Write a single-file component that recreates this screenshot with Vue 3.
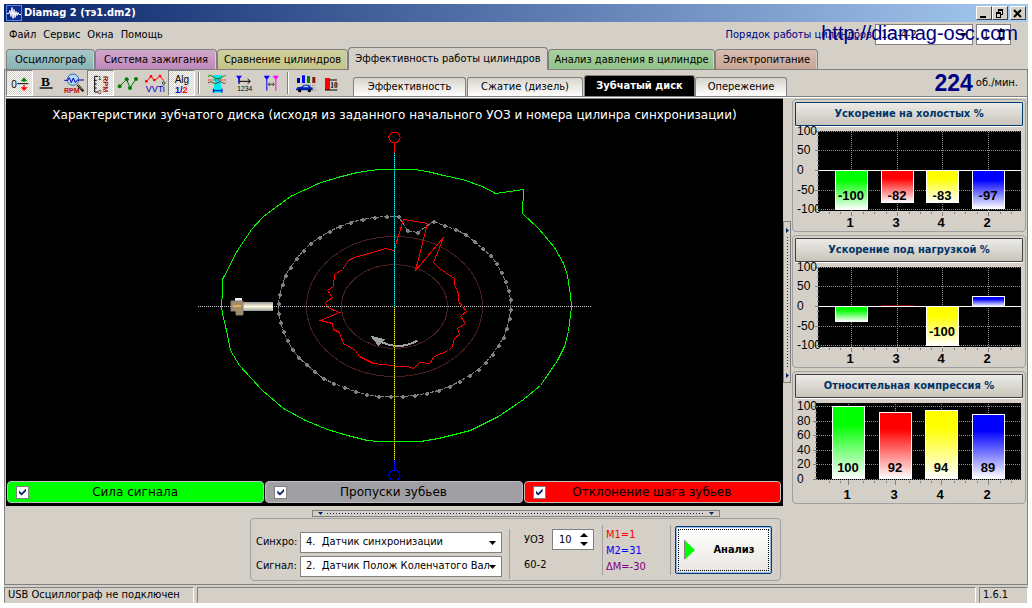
<script setup>
import { ref } from 'vue'

const menu = ['Файл', 'Сервис', 'Окна', 'Помощь']
const tabs = [
  { name: 'Осциллограф', tone: 'teal', width: 89 },
  { name: 'Система зажигания', tone: 'violet', width: 122 },
  { name: 'Сравнение цилиндров', tone: 'olive', width: 131 },
  { name: 'Эффективность работы цилиндров', tone: 'active', width: 200 },
  { name: 'Анализ давления в цилиндре', tone: 'green', width: 167 },
  { name: 'Электропитание', tone: 'brown', width: 103 }
]
const subtabs = [
  { name: 'Эффективность', width: 113 },
  { name: 'Сжатие (дизель)', width: 116 },
  { name: 'Зубчатый диск', width: 111, active: true },
  { name: 'Опережение', width: 92 }
]
const layers = ref([
  { name: 'Сила сигнала', tone: 'lime', on: true },
  { name: 'Пропуски зубьев', tone: 'grey', on: true },
  { name: 'Отклонение шага зубьев', tone: 'red', on: true }
])
const uoz = ref('10')
const first = ref('1')

const full = { ticks: [[100, 4], [50, 23], [0, 43], [-50, 63], [-100, 82]], left: 23, bottom: 84, zero: 43, xs: [56, 102, 147, 193] }
const charts = [
  {
    title: 'Ускорение на холостых %', focus: true, ...full,
    bars: [
      { id: 1, c: 'lime', y: 43, h: 39, t: '-100' },
      { id: 3, c: 'red', y: 43, h: 32, t: '-82' },
      { id: 4, c: 'yellow', y: 43, h: 32, t: '-83' },
      { id: 2, c: 'blue', y: 43, h: 38, t: '-97' }
    ]
  },
  {
    title: 'Ускорение под нагрузкой %', ...full,
    bars: [
      { id: 1, c: 'lime', y: 43, h: 15 },
      { id: 3, c: 'red', y: 42, h: 0 },
      { id: 4, c: 'yellow', y: 43, h: 39, t: '-100' },
      { id: 2, c: 'blue', y: 33, h: 10 }
    ]
  },
  {
    title: 'Относительная компрессия %',
    ticks: [[100, 7], [80, 22], [60, 36], [40, 51], [20, 65], [0, 80]], left: 21, bottom: 81, zero: 80, xs: [53, 100, 146, 193],
    bars: [
      { id: 1, c: 'lime', y: 7, h: 72, t: '100' },
      { id: 3, c: 'red', y: 13, h: 66, t: '92' },
      { id: 4, c: 'yellow', y: 11, h: 68, t: '94' },
      { id: 2, c: 'blue', y: 15, h: 64, t: '89' }
    ]
  }
]
const gradients = { lime: '#00ff00', red: '#ff0000', yellow: '#ffff00', blue: '#0000ff' }
const minor = [34, 45, 68, 79, 91, 114, 125, 136, 159, 170, 182, 205, 216]

const teeth = [
  [208, 91], [196, 91], [184, 92], [172, 94], [160, 97], [149, 101], [139, 106], [129, 112], [120, 118], [113, 125],
  [106, 133], [100, 142], [95, 150], [92, 159], [89, 169], [88, 178], [88, 188], [90, 197], [93, 206], [97, 215],
  [102, 224], [108, 232], [116, 239], [124, 246], [133, 253], [143, 258], [154, 262], [165, 266], [176, 269], [188, 271],
  [200, 271], [212, 271], [224, 270], [236, 268], [248, 265], [259, 261], [269, 256], [279, 250], [288, 244], [295, 237],
  [302, 229], [308, 220], [313, 212], [316, 203], [319, 193], [320, 184], [320, 174], [318, 165], [315, 156], [311, 147],
  [306, 138], [300, 130], [292, 123], [284, 116], [275, 109], [265, 104], [254, 100], [243, 96], [227, 107], [217, 105]
]
const force = '204,44 190,44 180,45 167,47 147,52 128,58 100,71 73,91 61,104 47,125 32,154 32,168 31,180 32,188 36,205 40,225 49,240 72,265 93,283 115,295 137,304 157,310 177,315 187,316 210,316 230,316 248,313 280,305 308,291 333,274 350,260 367,235 374,221 378,206 381,181 380,170 377,150 373,138 364,122 348,103 332,88 332,76 333,75 333,64 305,68 292,61 272,54 253,50 237,46 224,44'
const pitch = '205,120 204,125 195,123 182,127 164,132 158,135 152,144 144,149 143,161 137,165 142,172 135,177 137,182 149,187 130,195 142,198 143,204 149,207 153,218 165,225 169,231 183,238 202,240 205,241 217,241 223,243 229,237 239,238 244,231 258,225 262,221 264,213 269,209 267,203 275,198 270,191 276,186 268,176 268,168 264,159 264,153 249,143 243,137 253,112 225,145 237,98 213,94'
</script>

<template>
  <div class="screen">
    <div class="window">
      <header class="titlebar">
        <svg class="logo" viewBox="0 0 16 16" aria-hidden="true">
          <rect width="16" height="16" fill="#0a2a90" />
          <path d="M0 .5h16M0 15.5h16M.5 0v16M15.5 0v16" stroke="#5f86d8" />
          <path d="M1 8.5h2l1-3 1 6 1-9 1 11 1-9 1 8 1-6 1 4 1-3 1 2h2" fill="none" stroke="#fff" />
        </svg>
        <h1>Diamag 2 (тэ1.dm2)</h1>
        <div class="caption-buttons">
          <button aria-label="Свернуть"><svg viewBox="0 0 13 11"><path d="M3 8h6v2H3z" /></svg></button>
          <button aria-label="Восстановить"><svg viewBox="0 0 13 11"><path d="M5 1.5h5M5 2.5h5M5.5 1v3M9.5 1v6M8 6.5h2M3 4.5h5M3 5.5h5M3.5 4v5M7.5 4v6M3 9.5h5" stroke="#000" /></svg></button>
          <button class="close" aria-label="Закрыть"><svg viewBox="0 0 13 11"><path d="M3 2l7 7M10 2l-7 7" stroke="#000" stroke-width="2" /></svg></button>
        </div>
      </header>

      <div class="menubar">
        <nav>
          <button v-for="m in menu" :key="m">{{ m }}</button>
        </nav>
        <div class="order">
          <label for="order">Порядок работы цилиндров</label>
          <div class="combo short">
            <select id="order"><option>1-3-4-2</option></select>
            <svg viewBox="0 0 7 4"><path d="M0 0h7L3.5 4z" /></svg>
          </div>
          <div class="spin small">
            <input v-model="first" type="text" aria-label="Номер цилиндра" />
            <div class="arrows">
              <button aria-label="Больше"><svg viewBox="0 0 8 4"><path d="M0 4h8L4 0z" /></svg></button>
              <button aria-label="Меньше"><svg viewBox="0 0 8 4"><path d="M0 0h8L4 4z" /></svg></button>
            </div>
          </div>
          <a class="site" href="http://diamag-osc.com">http://diamag-osc.com</a>
        </div>
      </div>

      <div class="tabs">
        <button v-for="t in tabs" :key="t.name" :class="['tab', t.tone]" :style="{ flexBasis: t.width + 'px' }">{{ t.name }}</button>
      </div>

      <main class="page">
        <div class="toolbar">
          <button class="tool on" aria-label="Ноль">
            <svg viewBox="18 213 78 72"><text x="31" y="263" font-size="30">0</text><path d="M49 251h33" stroke="#000" stroke-width="3" /><path d="M69 233v13" stroke="#008000" stroke-width="4" /><path d="M59 244l10-11 11 11z" fill="#008000" /><path d="M69 255v10" stroke="red" stroke-width="4" /><path d="M59 262h21l-11 11z" fill="red" /></svg>
          </button>
          <button class="tool" aria-label="Жирные линии">
            <svg viewBox="97 213 78 72"><text x="118" y="257" font-size="40" font-weight="bold" class="serif">B</text><path d="M114 264h39" stroke="#000" stroke-width="4" /></svg>
          </button>
          <button class="tool" aria-label="Поиск оборотов">
            <svg viewBox="177 213 78 72"><path d="M227 255l17 19" stroke="#000" stroke-width="7" /><path d="M228 255l14 16" stroke="#d0a040" stroke-width="3" /><circle cx="213" cy="239" r="17" fill="#b4dcf8" stroke="#3468a8" stroke-width="3" /><path d="M187 241h10l5-8 6 15 6-14 6 14 6-8h20" fill="none" stroke="#0000c0" stroke-width="3" /><text x="186" y="278" font-size="21" font-weight="bold" fill="#b01010">RPM</text></svg>
          </button>
          <button class="tool on" aria-label="Шкала оборотов">
            <svg viewBox="261 213 78 72"><path d="M291 229h-10v47h10M281 241h6M281 252h6M281 264h6" fill="none" stroke="#000" stroke-width="3" /><text x="291" y="240" font-size="18">1</text><text x="291" y="281" font-size="18">0</text><text transform="translate(306 228) rotate(90)" font-size="22" font-weight="bold" fill="#a01010">RPM</text></svg>
          </button>
          <button class="tool" aria-label="График">
            <svg viewBox="339 213 78 72"><path d="M353 259l21-21 10 26 18-27" fill="none" stroke="#008000" stroke-width="3" /><g fill="#008000"><circle cx="353" cy="259" r="6" /><circle cx="374" cy="238" r="6" /><circle cx="384" cy="264" r="6" /><circle cx="402" cy="237" r="6" /></g></svg>
          </button>
          <button class="tool" aria-label="VVTi">
            <svg viewBox="420 213 78 72"><path d="M432 246l15-17 10 13 17-14 11 14" fill="none" stroke="red" stroke-width="3" /><g fill="red"><circle cx="433" cy="244" r="4" /><circle cx="447" cy="229" r="4" /><circle cx="457" cy="240" r="4" /><circle cx="474" cy="228" r="4" /></g><circle cx="485" cy="249" r="4" fill="none" stroke="#000" stroke-width="2" /><text x="431" y="276" font-size="27" fill="#0000d0">VVTi</text></svg>
          </button>
          <button class="tool on" aria-label="Алгоритм">
            <svg viewBox="504 213 78 72"><text x="521" y="250" font-size="30">Alg</text><text x="522" y="280" font-size="27" font-weight="bold" fill="#0000c0">1/<tspan fill="red">2</tspan></text></svg>
          </button>
          <i class="sep"></i>
          <button class="tool" aria-label="Диапазон">
            <svg viewBox="606 213 78 72"><path d="M633 225h28l-5 22 5 31h-28l5-31z" fill="#00e8f0" /><path d="M618 229q8-6 15 1t15 6 14-6 9-2" fill="none" stroke="#008000" stroke-width="3" /><path d="M618 240h55" stroke="red" stroke-width="3" stroke-dasharray="4 3" /><path d="M618 249q8-7 15-1t15 0 14 0 9 0" fill="none" stroke="#604020" stroke-width="3" /><path d="M634 272h26M634 266v12M660 266v12" stroke="#0000d0" stroke-width="3" /></svg>
          </button>
          <button class="tool" aria-label="Нумерация">
            <svg viewBox="687 213 78 72"><path d="M711 230v22M711 244h33M737 237l8 7-8 7" fill="none" stroke="#000" stroke-width="3" /><path d="M702 227h18l-9 12z" fill="blue" /><path d="M711 230v20" stroke="blue" stroke-width="3" /><text x="706" y="273" font-size="20">1234</text></svg>
          </button>
          <button class="tool" aria-label="Метки">
            <svg viewBox="768 213 78 72"><path d="M785 227h19l-10 13zM793 235h3v37h-3z" fill="blue" /><path d="M812 227h19l-10 13zM820 235h3v37h-3z" fill="magenta" /><path d="M800 253h16M804 248l-5 5 5 5M812 248l5 5-5 5" fill="none" stroke="#000" stroke-width="2" /></svg>
          </button>
          <i class="sep"></i>
          <button class="tool" aria-label="Автомобиль">
            <svg viewBox="873 213 78 72"><path d="M885 234h9v15h-9z" fill="#00008b" /><path d="M900 226h9v23h-9z" fill="blue" /><path d="M915 228h9v21h-9z" fill="#008000" /><path d="M931 231h9v18h-9z" fill="#8b1010" /><path d="M882 268l4-6 13-2 6-6h15l7 8 5 1v8h-50z" fill="#0020b8" /><path d="M906 257h11l4 5h-18z" fill="#a0d0ff" /><circle cx="893" cy="272" r="5" /><circle cx="922" cy="272" r="5" /><path d="M924 256h18M932 264h10M934 272h9" stroke="#888" stroke-width="3" stroke-dasharray="3 3" /></svg>
          </button>
          <button class="tool" aria-label="Порог">
            <svg viewBox="957 213 78 72"><path d="M972 234h15v36h-15z" fill="red" /><path d="M972 270h37M984 240h24" stroke="#000" stroke-width="3" /><text x="988" y="263" font-size="22" font-weight="bold" class="serif">10</text></svg>
          </button>
          <div class="subtabs">
            <button v-for="s in subtabs" :key="s.name" :class="['subtab', { active: s.active }]" :style="{ flexBasis: s.width + 'px' }">{{ s.name }}</button>
          </div>
          <div class="speed"><strong>224</strong><span>об./мин.</span></div>
        </div>

        <div class="work">
          <section class="disc">
            <h2>Характеристики зубчатого диска (исходя из заданного начального УОЗ и номера цилинра синхронизации)</h2>
            <svg class="plot" viewBox="0 0 410 355" role="img" aria-label="Зубчатый диск">
              <defs>
                <linearGradient id="rod" x2="0" y2="1">
                  <stop offset="0" stop-color="#999" /><stop offset=".5" stop-color="#fffbe0" /><stop offset="1" stop-color="#999" />
                </linearGradient>
              </defs>
              <g fill="none" shape-rendering="crispEdges" transform="translate(.5 .5)">
                <ellipse cx="204" cy="181" rx="88" ry="70" stroke="#482020" />
                <ellipse cx="204" cy="181" rx="53" ry="42" stroke="#482020" />
                <path d="M7 181h394" stroke="#c8c8c8" stroke-dasharray="1 1" />
                <path d="M192 217q17 8 35-2" stroke="#a0a0a4" stroke-width="2" />
                <path d="M181 211l13 3-6 6z" fill="#a0a0a4" stroke="#a0a0a4" />
                <polygon :points="force" stroke="#00ff00" />
                <polygon :points="teeth.join(' ')" stroke="#808080" stroke-dasharray="4 1" />
                <path v-for="(p, i) in teeth" :key="i" :d="`M${p[0] - 2} ${p[1]}h4M${p[0]} ${p[1] - 2}v4`" stroke="#808080" stroke-width="2" />
                <polygon :points="pitch" stroke="#ff0000" />
                <path d="M204 17v10" stroke="#ff0000" />
                <path d="M204 27v154" stroke="#008080" />
                <path d="M204 27v154" stroke="#00ffff" stroke-dasharray="1 1" />
                <path d="M204 334v11" stroke="#0000ff" />
                <path d="M204 181v153" stroke="#707000" />
                <path d="M204 181v153" stroke="#ffff00" stroke-dasharray="1 1" />
                <path d="M201 7h6l3 5-3 5h-6l-3-5z" stroke="#ff0000" />
                <path d="M201 345h6l3 5-3 5h-6l-3-5z" stroke="#0000ff" />
              </g>
              <rect x="45" y="173" width="7" height="4" fill="#f0f0f0" />
              <rect x="53" y="177" width="30" height="9" fill="url(#rod)" />
              <path d="M41 176h12v14h-7v-4h-5z" fill="#a48c68" stroke="#808080" />
              <path d="M43 181h8" stroke="#d8b060" stroke-width="2" />
            </svg>
            <div class="legend">
              <label v-for="l in layers" :key="l.name" :class="['layer', l.tone]">
                <input v-model="l.on" type="checkbox" /><span>{{ l.name }}</span>
              </label>
            </div>
          </section>

          <div class="vsplit"><svg viewBox="0 0 3 5"><path d="M0 0v5l3-2.5z" /></svg><i></i><svg viewBox="0 0 3 5"><path d="M0 0v5l3-2.5z" /></svg></div>

          <aside class="charts">
            <section v-for="(c, n) in charts" :key="c.title" class="chart">
              <button :class="['chart-title', { focus: c.focus }]">{{ c.title }}</button>
              <svg viewBox="0 -1 228 103" role="img" :aria-label="c.title">
                <defs>
                  <linearGradient v-for="(g, k) in gradients" :id="`${k}${n}`" :key="k" x2="0" y2="1">
                    <stop offset="0" :stop-color="g" /><stop offset=".25" :stop-color="g" /><stop offset="1" stop-color="#fff" />
                  </linearGradient>
                </defs>
                <rect :x="c.left" y="4" :width="226 - c.left" :height="c.bottom - 4" />
                <g shape-rendering="crispEdges" transform="translate(.5 .5)" fill="none" stroke="#808080">
                  <path v-for="t in c.ticks" :key="t[0]" :d="`M${c.left} ${t[1]}H224`" stroke="#909090" stroke-dasharray="1 1" />
                  <path v-for="x in c.xs" :key="x" :d="`M${x} 4V${c.bottom}`" stroke="#909090" stroke-dasharray="1 1" />
                  <path v-for="t in c.ticks" :key="t[0]" :d="`M${c.left - 4} ${t[1]}h4`" />
                  <path v-for="k in 15" :key="k" :d="`M${c.left - 2} ${3 + k * 5}h2`" />
                  <path v-for="x in c.xs" :key="x" :d="`M${x} ${c.bottom}v4`" />
                  <path v-for="x in minor" :key="x" :d="`M${x} ${c.bottom}v2`" />
                  <path v-if="n < 2" :d="`M${c.left} ${c.zero}H225`" stroke="#fff" />
                  <rect v-for="(b, i) in c.bars" :key="b.id" :x="c.xs[i] - 16" :y="b.y" width="32" :height="b.h" :fill="`url(#${b.c}${n})`" :stroke="b.h ? '#fff' : 'none'" />
                  <path v-if="n === 1" d="M86 42h32" stroke="#800000" />
                </g>
                <g class="axis"><text v-for="t in c.ticks" :key="t[0]" x="2" :y="t[1] + 4">{{ t[0] }}</text></g>
                <g class="value">
                  <template v-for="(b, i) in c.bars" :key="b.id">
                    <text v-if="b.t" :x="c.xs[i]" y="73">{{ b.t }}</text>
                    <text :x="c.xs[i] - 1" y="100">{{ b.id }}</text>
                  </template>
                </g>
              </svg>
            </section>
          </aside>

          <div class="bottom">
            <div class="hsplit"><svg viewBox="0 0 5 3"><path d="M0 0h5L2.5 3z" /></svg><i></i><svg viewBox="0 0 5 3"><path d="M0 0h5L2.5 3z" /></svg></div>
            <form class="controls" @submit.prevent>
              <div class="sources">
                <label for="sync">Синхро:</label>
                <div class="combo">
                  <select id="sync"><option>4.&nbsp; Датчик синхронизации</option></select>
                  <svg viewBox="0 0 7 4"><path d="M0 0h7L3.5 4z" /></svg>
                </div>
                <label for="signal">Сигнал:</label>
                <div class="combo">
                  <select id="signal"><option>2.&nbsp; Датчик Полож Коленчатого Вал</option></select>
                  <svg viewBox="0 0 7 4"><path d="M0 0h7L3.5 4z" /></svg>
                </div>
              </div>
              <div class="angle">
                <div class="angle-row">
                  <label for="uoz">УОЗ</label>
                  <div class="spin">
                    <input id="uoz" v-model="uoz" type="text" />
                    <div class="arrows">
                      <button type="button" aria-label="Увеличить"><svg viewBox="0 0 8 4"><path d="M0 4h8L4 0z" /></svg></button>
                      <button type="button" aria-label="Уменьшить"><svg viewBox="0 0 8 4"><path d="M0 0h8L4 4z" /></svg></button>
                    </div>
                  </div>
                </div>
                <span>60-2</span>
              </div>
              <div class="marks"><span class="m1">M1=1</span><span class="m2">M2=31</span><span class="dm">ΔM=-30</span></div>
              <button class="analyse">
                <svg viewBox="0 0 11 20"><path d="M.5 0v20L11 10z" fill="#00ff00" /><path d="M.5 0v19" stroke="#808080" /></svg>
                <span>Анализ</span>
              </button>
            </form>
          </div>
        </div>
      </main>

      <footer class="status">
        <span class="device">USB Осциллограф не подключен</span>
        <span class="fill"></span>
        <span class="version">1.6.1</span>
      </footer>
    </div>
  </div>
</template>

<style>
body { background: #fff; }
</style>

<style scoped>
* { box-sizing: border-box; }
button, input, select { font: inherit; color: inherit; margin: 0; padding: 0; border: 0; background: none; border-radius: 0; }
svg { display: block; flex: none; }
.screen {
  min-height: 100vh; padding: 4px 4px 5px; display: flex;
  font: 11px/14px "DejaVu Sans Condensed", "DejaVu Sans", sans-serif; color: #000;
}
.window { flex: 1; min-width: 0; background: #d4d0c8; display: flex; flex-direction: column; }

.titlebar { height: 18px; display: flex; align-items: center; gap: 2px; padding: 0 2px; background: linear-gradient(90deg, #0a246a, #a6caf0); color: #fff; }
.logo { width: 16px; height: 16px; }
h1 { margin: 0; flex: 1; font-size: 11px; line-height: 18px; }
.caption-buttons { display: flex; }
.caption-buttons button { width: 16px; height: 14px; background: #d4d0c8; border: 1px solid; border-color: #fff #404040 #404040 #fff; }
.caption-buttons .close { margin-left: 2px; }
.caption-buttons svg { width: 13px; height: 11px; }

.menubar { height: 25px; display: flex; align-items: center; justify-content: space-between; padding: 0 17px 0 5px; }
.menubar nav { display: flex; gap: 7px; }
.order { position: relative; display: flex; align-items: center; gap: 3px; color: #000080; }
.order .combo, .order .spin { color: #000; }
.site { position: absolute; right: -7px; top: -2px; font: 20px/22px "Liberation Sans", sans-serif; color: #000080; text-decoration: none; }

.combo { position: relative; height: 21px; background: #fff; border: 1px solid #808080; }
.combo select { appearance: none; width: 100%; height: 100%; padding-left: 5px; outline: none; }
.combo svg { position: absolute; right: 5px; top: 8px; width: 7px; height: 4px; pointer-events: none; }
.combo.short { width: 98px; }
.spin { display: flex; align-items: center; width: 42px; height: 21px; background: #fff; border: 1px solid #808080; padding: 0 5px 0 6px; }
.spin.small { width: 35px; }
.spin input { flex: 1; min-width: 0; width: 10px; outline: none; }
.arrows { display: flex; flex-direction: column; gap: 5px; }
.arrows svg { width: 8px; height: 4px; }

.tabs { height: 22px; display: flex; align-items: flex-end; padding: 0 0 0 2px; position: relative; }
.tab { flex: 0 1 auto; height: 20px; white-space: nowrap; border: 1px solid #808080; border-bottom: 0; border-radius: 4px 4px 0 0; box-shadow: inset -1px 0 #d4d0c8; }
.teal { background: linear-gradient(#a8c8c8, #88b4b4); }
.violet { background: linear-gradient(#d0a8cc, #c088bc); }
.olive { background: linear-gradient(#d0d0a0, #c4c488); }
.green { background: linear-gradient(#a8d0a0, #90c488); }
.brown { background: linear-gradient(#d8bcb0, #c8a898); }
.tab.active { height: 23px; margin-bottom: -1px; background: #d4d0c8; box-shadow: none; z-index: 1; }

.page { flex: 1; border: 1px solid #808080; display: flex; flex-direction: column; padding-left: 1px; min-height: 0; }
.toolbar { height: 27px; display: flex; align-items: center; border-bottom: 1px solid #808080; }
.tool { width: 27px; height: 26px; border: 1px solid transparent; }
.tool svg { width: 26px; height: 24px; font-family: "Liberation Sans", sans-serif; }
.tool .serif { font-family: "Liberation Serif", serif; }
.tool.on { border-color: #808080 #fff #fff #808080; background: repeating-conic-gradient(#fff 0 25%, #d4d0c8 0 50%) 0 0 / 2px 2px; }
.sep { width: 2px; height: 22px; margin: 0 3px; border-left: 1px solid #808080; border-right: 1px solid #fff; }
.subtabs { flex: 1; display: flex; align-items: flex-end; align-self: stretch; padding-left: 7px; }
.subtab { flex: 0 1 auto; height: 19px; white-space: nowrap; border: 1px solid #808080; border-bottom: 0; border-radius: 3px 3px 0 0; background: linear-gradient(#d8d4cc, #fff); margin-right: 1px; }
.subtab.active { height: 21px; background: #000; color: #fff; font-weight: bold; margin: 0; }
.speed { display: flex; align-items: center; gap: 3px; padding-right: 9px; }
.speed strong { font: bold 23px/26px "Liberation Sans", sans-serif; color: #000080; }

.work { flex: 1; display: grid; grid-template: auto 1fr / minmax(0, 1fr) 8px 236px; border-top: 1px solid #fff; }
.disc { display: flex; flex-direction: column; background: #000; border-top: 1px solid #808080; }
h2 { margin: 0; padding-top: 8px; font: 12px/17px "DejaVu Sans", sans-serif; color: #fff; text-align: center; white-space: nowrap; height: 26px; }
.plot { width: 410px; height: 355px; align-self: center; }
.legend { display: flex; gap: 1px; padding: 1px 2px 3px 1px; }
.layer { flex: 1; display: flex; align-items: center; height: 22px; padding-left: 8px; border: 1px solid #c0c0c0; border-radius: 4px; font: 12px/16px "DejaVu Sans", sans-serif; }
.layer span { flex: 1; text-align: center; padding-right: 22px; }
.layer.lime { background: #00ff00; }
.layer.grey { background: #a0a0a4; }
.layer.red { background: #ff0000; }
.layer input { appearance: none; width: 13px; height: 13px; margin: 0; background: #fff; border: 1px solid #808080; position: relative; }
.layer input:checked::after { content: ""; position: absolute; inset: 2px; background: #0a246a; clip-path: polygon(0 30%, 38% 65%, 100% 0, 100% 38%, 38% 100%, 0 68%); }

.vsplit { align-self: center; height: 162px; border: 1px solid #808080; display: flex; flex-direction: column; align-items: center; justify-content: space-between; padding: 6px 0 4px; }
.vsplit i { flex: 1; width: 1px; margin: 4px 0; background: repeating-linear-gradient(#0a246a 0 1px, transparent 1px 3px); }
.vsplit svg { width: 3px; height: 5px; fill: #0a246a; }

.charts { display: flex; flex-direction: column; gap: 3px; padding: 1px 1px 0 1px; }
.chart { border: 1px solid #a0a0a0; border-radius: 4px; padding: 2px; }
.chart-title { display: block; width: 100%; height: 24px; border: 1px solid #404040; border-radius: 1px; background: linear-gradient(#ecebe7, #c8c4ba); box-shadow: 0 1px #fff; color: #003366; font-weight: bold; }
.chart-title.focus { border-color: #003c74; }
.chart svg { width: 100%; overflow: visible; }
.axis text { font: 12px "Liberation Sans", sans-serif; }
.value text { font: bold 13px "Liberation Sans", sans-serif; text-anchor: middle; }

.bottom { grid-column: 1 / -1; display: flex; flex-direction: column; align-items: center; padding: 4px 2px 3px 0; }
.hsplit { width: 408px; height: 7px; border: 1px solid #808080; display: flex; align-items: center; padding: 0 5px; }
.hsplit i { flex: 1; height: 1px; margin: 0 4px; background: repeating-linear-gradient(90deg, #0a246a 0 1px, transparent 1px 3px); }
.hsplit svg { width: 5px; height: 3px; fill: #0a246a; }
.controls { margin: 1px 0 0 244px; align-self: flex-start; display: flex; align-items: center; height: 63px; border: 1px solid #a0a0a0; border-radius: 4px; padding: 0 8px 0 5px; }
.sources { display: grid; grid-template-columns: 44px 202px; row-gap: 3px; align-items: center; padding: 9px 7px 0 0; }
.angle { height: 50px; width: 93px; border-left: 1px solid #a0a0a0; padding: 0 0 0 14px; margin-top: 9px; }
.angle-row { display: flex; justify-content: space-between; align-items: center; height: 21px; margin-bottom: 8px; padding-right: 8px; }
.marks { height: 50px; width: 69px; border-left: 1px solid #a0a0a0; border-right: 1px solid #a0a0a0; padding: 2px 0 0 3px; display: flex; flex-direction: column; line-height: 16px; }
.m1 { color: #ff0000; }
.m2 { color: #0000ff; }
.dm { color: #800080; }
.analyse { width: 97px; height: 48px; margin-left: 4px; display: flex; align-items: center; padding: 0 8px; border: 1px solid #003c74; border-radius: 2px; background: linear-gradient(#fff, #e8e6e0); box-shadow: inset 0 0 0 1px #98b8ea; outline: 1px dotted #000; outline-offset: -4px; font-weight: bold; }
.analyse svg { width: 11px; height: 20px; }
.analyse span { flex: 1; padding-left: 10px; text-align: center; }

.status { display: flex; gap: 3px; padding-top: 2px; height: 18px; }
.status span { border: 1px solid; border-color: #808080 #fff transparent #808080; padding-left: 3px; }
.device { width: 190px; }
.fill { flex: 1; }
.version { width: 49px; }
</style>
